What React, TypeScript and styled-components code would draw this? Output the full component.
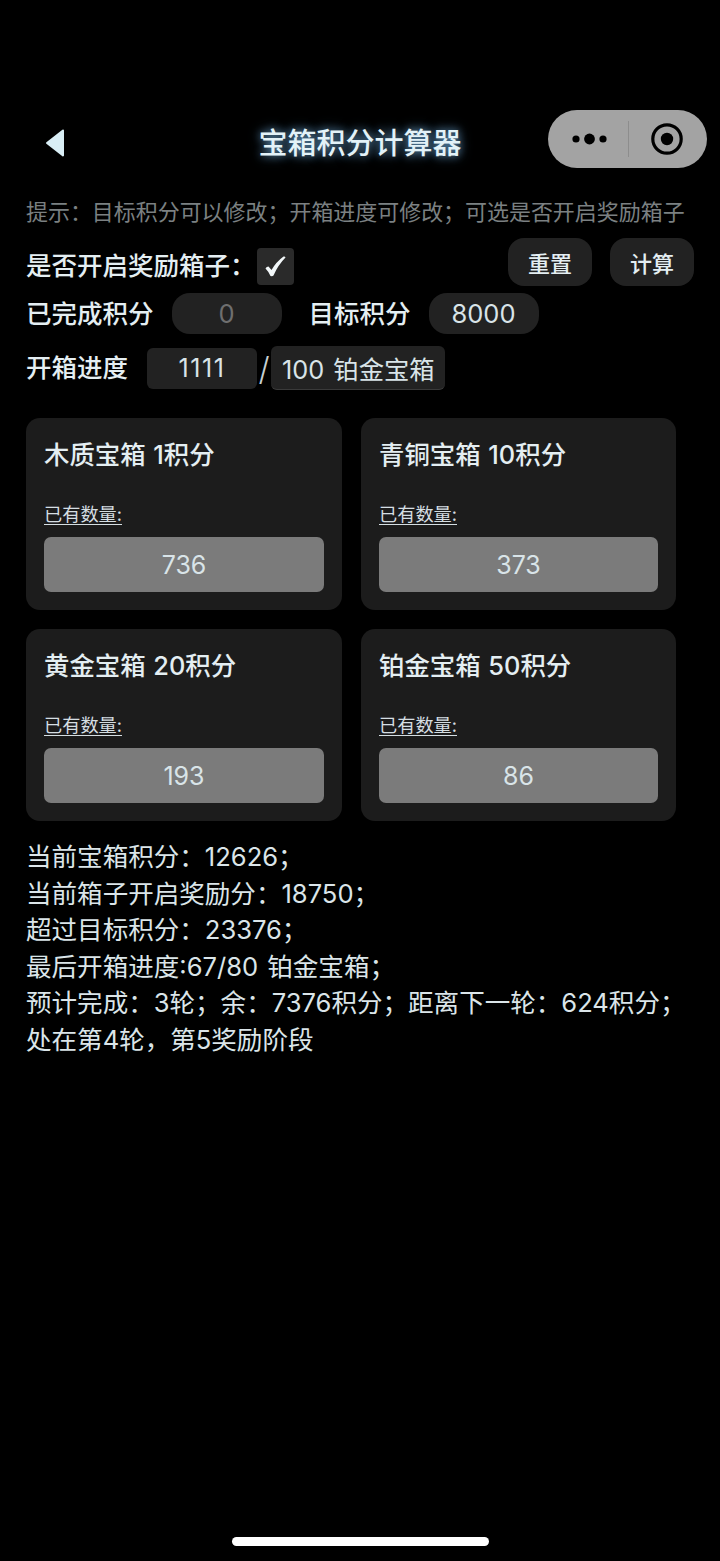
import React from "react";
import styled, { createGlobalStyle } from "styled-components";

const GlobalStyle = createGlobalStyle`
  html, body {
    margin: 0;
    padding: 0;
    background: #000;
  }
  body {
    font-family: "Inter", "Noto Sans CJK SC", sans-serif;
    color: #e4eef2;
  }
`;

const chests = [
  { title: "木质宝箱 1积分", count: 736 },
  { title: "青铜宝箱 10积分", count: 373 },
  { title: "黄金宝箱 20积分", count: 193 },
  { title: "铂金宝箱 50积分", count: 86 },
];

const results = [
  "当前宝箱积分：12626；",
  "当前箱子开启奖励分：18750；",
  "超过目标积分：23376；",
  "最后开箱进度:67/80 铂金宝箱；",
  "预计完成：3轮；余：7376积分；距离下一轮：624积分；",
  "处在第4轮，第5奖励阶段",
];

const App = () => {
  return (
    <Page>
      <GlobalStyle />
      <NavBar>
        <BackBtn>
          <svg width="22" height="30" viewBox="0 0 22 30">
            <path d="M19 2.5 L3 15 L19 27.5 Z" fill="#d9eef5" stroke="#d9eef5" strokeWidth="2" strokeLinejoin="round" />
          </svg>
        </BackBtn>
        <Title>宝箱积分计算器</Title>
        <Capsule>
          <MoreSide>
            <svg width="38" height="14" viewBox="0 0 38 14">
              <circle cx="5" cy="7" r="3.6" fill="#000" />
              <circle cx="18.5" cy="7" r="5.4" fill="#000" />
              <circle cx="32" cy="7" r="3.6" fill="#000" />
            </svg>
          </MoreSide>
          <CapsuleLine />
          <CloseSide>
            <svg width="34" height="34" viewBox="0 0 34 34">
              <circle cx="17" cy="17" r="14.2" fill="none" stroke="#000" strokeWidth="3.2" />
              <circle cx="17" cy="17" r="6.2" fill="#000" />
            </svg>
          </CloseSide>
        </Capsule>
      </NavBar>

      <Content>
        <Hint>提示：目标积分可以修改；开箱进度可修改；可选是否开启奖励箱子</Hint>

        <TopRow>
          <BonusGroup>
            <Label>是否开启奖励箱子：</Label>
            <CheckBox>
              <svg width="24" height="24" viewBox="0 0 24 24">
                <path d="M2.5 14.5 Q3.5 12.5 5.5 12.5 L8.5 16 Q13 8 20.5 2.5 Q22 2 22.5 3.5 Q15 11 10.5 21.5 Q9.5 22.5 7.5 22 Q5.5 17.5 2.5 14.5 Z" fill="#f2f7f9" />
              </svg>
            </CheckBox>
          </BonusGroup>
          <Actions>
            <ActionBtn>重置</ActionBtn>
            <ActionBtn>计算</ActionBtn>
          </Actions>
        </TopRow>

        <ScoreRow>
          <Label>已完成积分</Label>
          <ScoreBox $dim>0</ScoreBox>
          <Label>目标积分</Label>
          <ScoreBox>8000</ScoreBox>
        </ScoreRow>

        <ProgressRow>
          <Label>开箱进度</Label>
          <ProgressInput>1111</ProgressInput>
          <Slash>/</Slash>
          <ProgressTotal>100 铂金宝箱</ProgressTotal>
        </ProgressRow>

        <CardGrid>
          {chests.map((c) => (
            <Card key={c.title}>
              <CardTitle>{c.title}</CardTitle>
              <CountLabel>已有数量:</CountLabel>
              <CountBox>{c.count}</CountBox>
            </Card>
          ))}
        </CardGrid>

        <Results>
          {results.map((r) => (
            <ResultLine key={r}>{r}</ResultLine>
          ))}
        </Results>
      </Content>

      <HomeBar />
    </Page>
  );
};

export default App;

const Page = styled.div`
  width: 720px;
  height: 1561px;
  position: relative;
  overflow: hidden;
  background: #000;
`;

const NavBar = styled.div`
  height: 58px;
  margin-top: 110px;
  padding: 0 13px 0 44px;
  display: flex;
  align-items: center;
  position: relative;
  justify-content: space-between;
`;

const BackBtn = styled.div`
  display: flex;
  align-items: center;
  padding-top: 8px;
`;

const Title = styled.div`
  position: absolute;
  left: 0;
  right: 0;
  top: 15px;
  text-align: center;
  font-size: 29px;
  line-height: 38px;
  font-weight: 500;
  color: #e3f2f8;
  text-shadow: 0 0 8px rgba(120, 180, 225, 0.75), 0 0 14px rgba(90, 150, 200, 0.5);
`;

const Capsule = styled.div`
  width: 159px;
  height: 58px;
  border-radius: 29px;
  background: #a3a3a3;
  display: flex;
  align-items: center;
`;

const MoreSide = styled.div`
  width: 80px;
  box-sizing: border-box;
  padding-left: 4px;
  display: flex;
  justify-content: center;
  align-items: center;
`;

const CloseSide = styled.div`
  width: 78px;
  box-sizing: border-box;
  padding-right: 2px;
  display: flex;
  justify-content: center;
  align-items: center;
`;

const CapsuleLine = styled.div`
  width: 1px;
  height: 36px;
  background: #8d8d8d;
`;

const Content = styled.div`
  padding: 0 26px;
`;

const Hint = styled.div`
  margin-top: 30px;
  font-size: 21.96px;
  line-height: 28px;
  color: #7b8082;
  white-space: nowrap;
`;

const Label = styled.span`
  font-size: 25.5px;
  line-height: 36px;
  font-weight: 500;
  color: #e4eef2;
  white-space: nowrap;
`;

const TopRow = styled.div`
  margin-top: 12px;
  height: 48px;
  display: flex;
  justify-content: space-between;
  align-items: flex-start;
`;

const BonusGroup = styled.div`
  display: flex;
  align-items: center;
  height: 56px;
`;

const CheckBox = styled.div`
  width: 37px;
  height: 37px;
  margin-left: 1px;
  border-radius: 4px;
  background: #2a2a2a;
  display: flex;
  align-items: center;
  justify-content: center;
`;

const Actions = styled.div`
  display: flex;
  gap: 18px;
`;

const ActionBtn = styled.div`
  width: 84px;
  height: 48px;
  border-radius: 16px;
  background: #222;
  font-size: 22px;
  font-weight: 500;
  color: #e4eef2;
  display: flex;
  align-items: center;
  justify-content: center;
`;

const ScoreRow = styled.div`
  margin-top: 7px;
  height: 41px;
  display: flex;
  align-items: center;
  gap: 18px;
`;

const ScoreBox = styled.div<{ $dim?: boolean }>`
  width: 110px;
  height: 41px;
  border-radius: 18px;
  background: #222;
  font-size: 25.5px;
  color: ${(p) => (p.$dim ? "#6f6f6f" : "#d9e4e8")};
  display: flex;
  align-items: center;
  justify-content: center;
  margin-right: 9px;
`;

const ProgressRow = styled.div`
  margin-top: 12px;
  height: 44px;
  display: flex;
  align-items: center;
`;

const ProgressInput = styled.div`
  width: 110px;
  height: 41px;
  margin-left: 19px;
  border-radius: 6px;
  background: #222;
  font-size: 25px;
  letter-spacing: 1.6px;
  color: #d9e4e8;
  display: flex;
  align-items: center;
  justify-content: center;
`;

const Slash = styled.span`
  width: 14px;
  font-size: 32px;
  font-weight: 300;
  text-align: center;
  color: #c6d0d4;
`;

const ProgressTotal = styled.div`
  height: 43px;
  padding: 0 10px 0 11px;
  border-radius: 6px;
  background: #222;
  border-bottom: 1px solid #3a3a3a;
  font-size: 25.3px;
  word-spacing: 2px;
  color: #d9e4e8;
  display: flex;
  align-items: center;
  white-space: nowrap;
`;

const CardGrid = styled.div`
  margin-top: 28px;
  width: 650px;
  display: grid;
  grid-template-columns: 316px 315px;
  gap: 19px;
`;

const Card = styled.div`
  height: 192px;
  box-sizing: border-box;
  padding: 19px 18px 18px;
  border-radius: 14px;
  background: #1c1c1c;
`;

const CardTitle = styled.div`
  font-size: 25.4px;
  line-height: 36px;
  font-weight: 500;
  word-spacing: 1px;
  color: #e4eef2;
`;

const CountLabel = styled.div`
  margin-top: 29px;
  font-size: 18.2px;
  line-height: 24px;
  color: #d5dee2;
  text-decoration: underline;
  text-underline-offset: 3px;
`;

const CountBox = styled.div`
  margin-top: 11px;
  height: 55px;
  border-radius: 7px;
  background: #7b7b7b;
  font-size: 25px;
  color: #d9e4e8;
  display: flex;
  align-items: center;
  justify-content: center;
`;

const Results = styled.div`
  margin-top: 18px;
`;

const ResultLine = styled.div`
  font-size: 25.55px;
  line-height: 36.6px;
  word-spacing: 2px;
  color: #dbe5e9;
  white-space: nowrap;
`;

const HomeBar = styled.div`
  position: absolute;
  left: 232px;
  bottom: 15px;
  width: 257px;
  height: 9px;
  border-radius: 5px;
  background: #fff;
`;
